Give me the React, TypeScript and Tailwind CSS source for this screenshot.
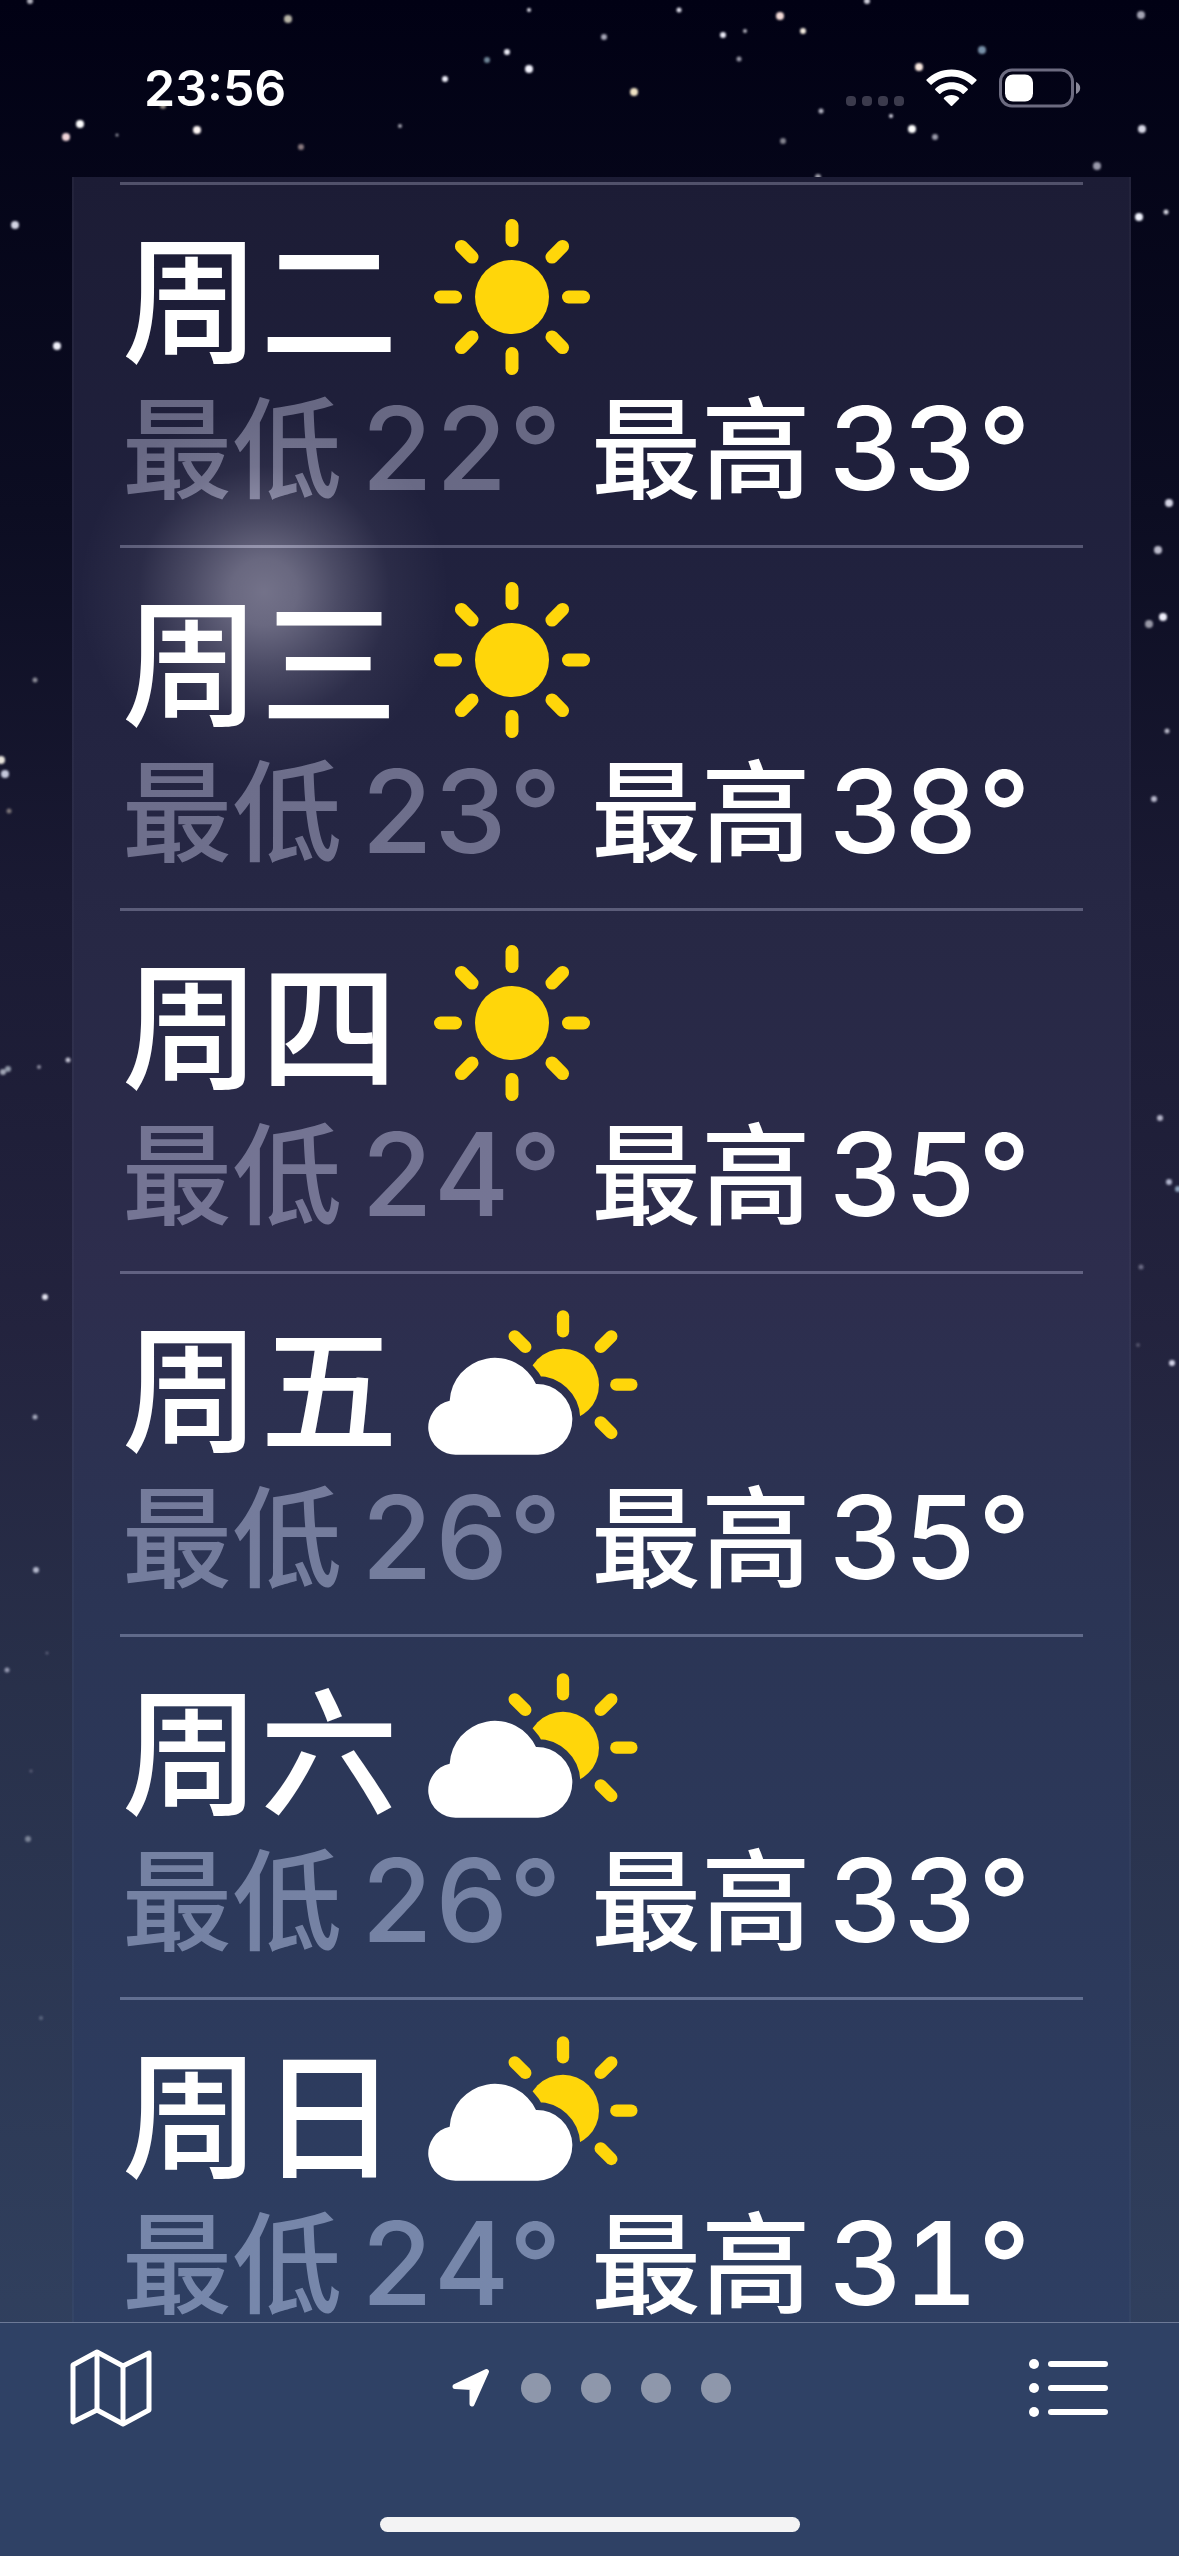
import { Fragment } from 'react';

type Condition = 'sunny' | 'partly-cloudy';

interface Forecast {
  day: string;
  condition: Condition;
  low: number;
  high: number;
}

interface Star {
  x: number;
  y: number;
  r: number;
  color: string;
}

const forecasts: Forecast[] = [
  { day: '周二', condition: 'sunny', low: 22, high: 33 },
  { day: '周三', condition: 'sunny', low: 23, high: 38 },
  { day: '周四', condition: 'sunny', low: 24, high: 35 },
  { day: '周五', condition: 'partly-cloudy', low: 26, high: 35 },
  { day: '周六', condition: 'partly-cloudy', low: 26, high: 33 },
  { day: '周日', condition: 'partly-cloudy', low: 24, high: 31 },
];

const stars: Star[] = [
  { x: 30, y: 1, r: 3, color: '#b0b0bc' },
  { x: 288, y: 19, r: 4, color: '#b8b5a8' },
  { x: 529, y: 10, r: 2, color: '#e0e0ea' },
  { x: 507, y: 52, r: 3, color: '#ececf6' },
  { x: 487, y: 60, r: 3, color: '#6f8597' },
  { x: 529, y: 69, r: 4, color: '#f4f4ff' },
  { x: 445, y: 79, r: 3, color: '#f0f0fa' },
  { x: 80, y: 124, r: 4, color: '#ffffff' },
  { x: 66, y: 137, r: 4, color: '#f2d6da' },
  { x: 117, y: 135, r: 1.5, color: '#a0a0ac' },
  { x: 197, y: 130, r: 4, color: '#fff8f6' },
  { x: 301, y: 147, r: 3, color: '#8a7a80' },
  { x: 400, y: 126, r: 2, color: '#a8a8b4' },
  { x: 163, y: 106, r: 3, color: '#8e8780' },
  { x: 15, y: 225, r: 4, color: '#d4d6e4' },
  { x: 57, y: 346, r: 4, color: '#f0f0fa' },
  { x: 604, y: 37, r: 3, color: '#a8a8b8' },
  { x: 679, y: 10, r: 2.5, color: '#dcdce8' },
  { x: 723, y: 35, r: 3, color: '#ececf8' },
  { x: 745, y: 31, r: 2, color: '#b4b4c0' },
  { x: 739, y: 59, r: 2.5, color: '#9a9aa8' },
  { x: 634, y: 92, r: 4, color: '#efe2c4' },
  { x: 780, y: 16, r: 4, color: '#f5dcd8' },
  { x: 803, y: 31, r: 3, color: '#f4ece0' },
  { x: 867, y: 1, r: 3, color: '#cfcfda' },
  { x: 821, y: 111, r: 2.5, color: '#b4b4c2' },
  { x: 783, y: 141, r: 3, color: '#83838f' },
  { x: 919, y: 67, r: 4, color: '#fbe9e0' },
  { x: 982, y: 50, r: 4, color: '#7890a8' },
  { x: 891, y: 116, r: 2, color: '#d8d8e4' },
  { x: 912, y: 129, r: 4, color: '#ffffff' },
  { x: 935, y: 137, r: 3, color: '#9c9cac' },
  { x: 818, y: 177, r: 3, color: '#a0a0ac' },
  { x: 1141, y: 15, r: 4, color: '#a4a4b4' },
  { x: 1142, y: 129, r: 4, color: '#d8d8e6' },
  { x: 1097, y: 166, r: 4, color: '#9a9aac' },
  { x: 1139, y: 217, r: 4, color: '#f2f4ff' },
  { x: 1166, y: 212, r: 2.5, color: '#d4d4e0' },
  { x: 1169, y: 503, r: 4, color: '#d4d4e4' },
  { x: 1158, y: 550, r: 4, color: '#bcbccc' },
  { x: 1163, y: 617, r: 4, color: '#f0f0fc' },
  { x: 1149, y: 624, r: 4, color: '#9a9aa8' },
  { x: 1167, y: 731, r: 2.5, color: '#b8b8c8' },
  { x: 1154, y: 799, r: 3, color: '#b8b8cc' },
  { x: 1160, y: 1118, r: 3, color: '#b4b4c8' },
  { x: 1169, y: 1182, r: 3, color: '#b0b4cc' },
  { x: 1178, y: 1189, r: 3, color: '#8aa0b8' },
  { x: 1141, y: 1267, r: 2.5, color: '#6c6c84' },
  { x: 1138, y: 1345, r: 2, color: '#54546c' },
  { x: 1172, y: 1363, r: 3, color: '#d4d4e8' },
  { x: 35, y: 680, r: 2.5, color: '#8c8c98' },
  { x: 1, y: 760, r: 4, color: '#e8e4dc' },
  { x: 5, y: 774, r: 4, color: '#c4c8dc' },
  { x: 9, y: 811, r: 2.5, color: '#7c7478' },
  { x: 8, y: 1069, r: 3, color: '#9098a8' },
  { x: 3, y: 1072, r: 3, color: '#a0a4b4' },
  { x: 39, y: 1067, r: 2, color: '#8c8ca0' },
  { x: 68, y: 1060, r: 2.5, color: '#c0c0d0' },
  { x: 45, y: 1297, r: 3, color: '#e4e4f0' },
  { x: 35, y: 1417, r: 2.5, color: '#a4a8bc' },
  { x: 36, y: 1570, r: 3, color: '#b4b8cc' },
  { x: 7, y: 1670, r: 2.5, color: '#9498b0' },
  { x: 47, y: 1653, r: 1.5, color: '#60647c' },
  { x: 31, y: 1771, r: 1.5, color: '#60647c' },
  { x: 28, y: 1839, r: 3, color: '#7c8498' },
  { x: 41, y: 2018, r: 2, color: '#5c6880' },
];

function Sky() {
  return (
    <div className="absolute inset-0 -z-10 overflow-hidden bg-[linear-gradient(to_bottom,#010114_0%,#0c0d22_20%,#1a1a33_35%,#23233e_52%,#28304a_66%,#303f5d_90%,#2f4165_100%)]">
      <svg className="h-full w-full" viewBox="0 0 1179 2556" preserveAspectRatio="xMidYMin slice" aria-hidden="true">
        <defs>
          <filter id="twinkle">
            <feGaussianBlur stdDeviation="1" />
          </filter>
        </defs>
        <g filter="url(#twinkle)">
          {stars.map((star) => (
            <circle key={`${star.x}-${star.y}`} cx={star.x} cy={star.y} r={star.r} fill={star.color} />
          ))}
        </g>
      </svg>
    </div>
  );
}

function SunIcon() {
  return (
    <svg width="168" height="156" viewBox="-84 -78 168 156" role="img" aria-label="晴">
      <circle r="37" fill="#ffd60a" />
      {[0, 45, 90, 135, 180, 225, 270, 315].map((angle) => (
        <line
          key={angle}
          y1="-71.5"
          y2="-56.5"
          transform={`rotate(${angle})`}
          stroke="#ffd60a"
          strokeWidth="13"
          strokeLinecap="round"
        />
      ))}
    </svg>
  );
}

const cloudPath =
  'M170 523 A82 82 0 0 1 149 361 A136 136 0 0 1 408 311 A106 106 0 0 1 414 523 Z';

function CloudSunIcon() {
  return (
    <svg width="212" height="156" viewBox="84 83 636 468" role="img" aria-label="多云">
      <defs>
        <mask id="behind-cloud" maskUnits="userSpaceOnUse" x="84" y="83" width="636" height="468">
          <rect x="84" y="83" width="636" height="468" fill="white" />
          <path d={cloudPath} fill="black" stroke="black" strokeWidth="48" />
        </mask>
      </defs>
      <circle cx="489" cy="313" r="108" fill="#ffd60a" mask="url(#behind-cloud)" />
      {[-45, 0, 45, 90, 135].map((angle) => (
        <line
          key={angle}
          y1="-205"
          y2="-160"
          transform={`translate(489 313) rotate(${angle})`}
          stroke="#ffd60a"
          strokeWidth="37"
          strokeLinecap="round"
        />
      ))}
      <path d={cloudPath} fill="white" />
    </svg>
  );
}

function StatusBar() {
  return (
    <header className="flex h-[177px] shrink-0 items-start justify-between pt-[66px] pr-[98px] pl-36">
      <time className="text-[50px] leading-[44px] font-semibold">23:56</time>
      <div className="flex h-11 items-center gap-[22px]">
        <div className="flex items-center gap-[22px]">
          <div className="flex gap-[6px] pt-[26px]" aria-label="无信号">
            {[0, 1, 2, 3].map((bar) => (
              <span key={bar} className="size-[10px] rounded-[4px] bg-[#3b3a4c]" />
            ))}
          </div>
          <svg width="51" height="38" viewBox="0 0 51 38" role="img" aria-label="Wi-Fi">
            <g fill="white">
              <path d="M25.5 0.5 C35.5 0.5 44.3 4.4 50.4 10.6 Q51 11.2 50.4 11.8 L46.5 15.6 Q45.9 16.2 45.3 15.6 C40.1 10.6 33.2 7.6 25.5 7.6 C17.8 7.6 10.9 10.6 5.7 15.6 Q5.1 16.2 4.5 15.6 L0.6 11.8 Q0 11.2 0.6 10.6 C6.7 4.4 15.5 0.5 25.5 0.5 Z" />
              <path d="M25.5 13.3 C31.9 13.3 37.6 15.7 41.7 19.7 Q42.3 20.3 41.7 20.9 L37.8 24.7 Q37.2 25.2 36.6 24.7 C33.7 22 29.8 20.3 25.5 20.3 C21.2 20.3 17.3 22 14.4 24.7 Q13.8 25.2 13.2 24.7 L9.3 20.9 Q8.7 20.3 9.3 19.7 C13.4 15.7 19.1 13.3 25.5 13.3 Z" />
              <path d="M25.5 26 C28.4 26 31 27 33 28.7 Q33.6 29.3 33 29.9 L26.2 36.7 Q25.5 37.4 24.8 36.7 L18 29.9 Q17.4 29.3 18 28.7 C20 27 22.6 26 25.5 26 Z" />
            </g>
          </svg>
        </div>
        <svg width="82" height="40" viewBox="0 0 82 40" role="img" aria-label="电量 40%">
          <rect x="1.5" y="2" width="72" height="36" rx="11.5" fill="none" stroke="#6c6b80" strokeWidth="3" />
          <path d="M77 14 C79.6 15 81.2 17.4 81.2 20 C81.2 22.6 79.6 25 77 26 Z" fill="#8a899a" />
          <rect x="6" y="6.5" width="28" height="27" rx="8" fill="white" />
        </svg>
      </div>
    </header>
  );
}

function Temperature({ label, value }: { label: string; value: number }) {
  return (
    <span className="flex items-baseline gap-[18px]">
      <span>{label}</span>
      <span className="text-[115px] tabular-nums">{value}°</span>
    </span>
  );
}

function ForecastRow({ forecast }: { forecast: Forecast }) {
  return (
    <li className="h-[360px] pt-[34px] pl-[2px]">
      <div className="flex h-[156px] items-center gap-[30px]">
        <h2 className="pt-[10px] text-[138px] leading-[140px] font-medium">{forecast.day}</h2>
        {forecast.condition === 'sunny' ? <SunIcon /> : <CloudSunIcon />}
      </div>
      <div className="flex pt-5 text-[110px] leading-[108px] font-medium">
        <div className="w-[469px] text-[#494949] mix-blend-plus-lighter">
          <Temperature label="最低" value={forecast.low} />
        </div>
        <Temperature label="最高" value={forecast.high} />
      </div>
    </li>
  );
}

function TabBar() {
  return (
    <footer className="shrink-0 border-t border-[#6d7a97] bg-[#2f4165]">
      <div className="flex h-[130px] items-center justify-between px-[70px]">
        <button type="button" aria-label="地图">
          <svg width="82" height="78" viewBox="0 0 82 78" fill="none" stroke="white" strokeWidth="5" strokeLinejoin="round">
            <path d="M3 16 L27 3 L53 17 L79 4 V61 L53 75 L27 61 L3 73 Z" />
            <path d="M27 3 V61 M53 17 V75" />
          </svg>
        </button>
        <nav className="flex items-center gap-[30px]" aria-label="城市">
          <button type="button" aria-label="当前位置">
            <svg width="40" height="40" viewBox="0 0 40 40">
              <path
                d="M4 18.5 L35.5 3.5 L21 36 V19.5 Z"
                fill="white"
                stroke="white"
                strokeWidth="5"
                strokeLinejoin="round"
              />
            </svg>
          </button>
          {[1, 2, 3, 4].map((page) => (
            <button key={page} type="button" aria-label={`城市 ${page}`} className="size-[30px] rounded-full bg-[#8e97ab]" />
          ))}
        </nav>
        <button type="button" aria-label="列表">
          <svg width="80" height="60" viewBox="0 0 80 60">
            {[6, 30, 54].map((y) => (
              <Fragment key={y}>
                <circle cx="5" cy={y} r="5" fill="white" />
                <line x1="22" x2="76" y1={y} y2={y} stroke="white" strokeWidth="6" strokeLinecap="round" />
              </Fragment>
            ))}
          </svg>
        </button>
      </div>
      <div className="flex h-[103px] items-end justify-center pb-6">
        <div className="h-[15px] w-[420px] rounded-full bg-[#f3f3f4]" />
      </div>
    </footer>
  );
}

export default function App() {
  return (
    <div className="relative isolate flex h-screen flex-col overflow-hidden font-[Inter,'Noto_Sans_CJK_SC',sans-serif] text-white">
      <Sky />
      <StatusBar />
      <main className="min-h-0 flex-1 overflow-y-auto pr-12 pl-[72px] [scrollbar-width:none]">
        <section className="relative isolate border-x-2 border-white/3 bg-[linear-gradient(to_bottom,#1c1c35_0%,#21223f_20%,#272845_35%,#2d2d4d_50%,#2b3555_66%,#2e3f63_100%)] px-[46px] pt-[5px]">
          {/* moonlight coming through the panel */}
          <div className="absolute top-[230px] left-[5px] -z-10 size-[370px] rounded-full bg-[radial-gradient(closest-side,rgba(245,240,255,0.39)_0%,rgba(245,240,255,0.34)_18%,rgba(245,240,255,0.2)_40%,rgba(245,240,255,0.05)_68%,transparent_100%)]" />
          <ul>
            {forecasts.map((forecast) => (
              <Fragment key={forecast.day}>
                <li className="h-[3px] bg-[#353535] mix-blend-plus-lighter" role="separator" />
                <ForecastRow forecast={forecast} />
              </Fragment>
            ))}
          </ul>
        </section>
      </main>
      <TabBar />
    </div>
  );
}
